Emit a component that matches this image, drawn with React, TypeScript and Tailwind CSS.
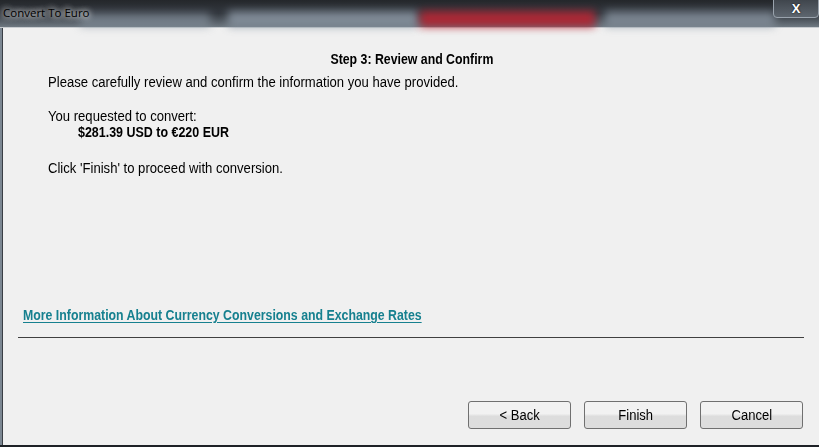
export default function App() {
    const narrow = { fontFamily: '"Liberation Sans", Arial, sans-serif' };

    return (
        <div className="w-[819px] h-[447px] overflow-hidden flex flex-col bg-[#1e2126]">
            {/* Title bar */}
            <div className="relative h-[27px] shrink-0 bg-gradient-to-b from-[#24272b] via-[#343940] to-[#6f7982] flex items-start">
                <div className="absolute left-[80px] top-[13px] w-[130px] h-[14px] bg-[#8995a2] blur-[4px] opacity-60" />
                <div className="absolute left-[228px] top-[11px] w-[190px] h-[16px] bg-[#8c98a5] blur-[4px] opacity-80" />
                <div className="absolute left-[420px] top-[11px] w-[175px] h-[16px] bg-[#b52331] blur-[4px] opacity-90" />
                <div className="absolute left-[605px] top-[11px] w-[170px] h-[16px] bg-[#8c98a5] blur-[4px] opacity-70" />
                <span
                    className="relative ml-[3px] mt-[6px] text-[11.5px] text-black leading-[14px]"
                    style={{ fontFamily: '"Open Sans", "Liberation Sans", sans-serif', textShadow: '0 0 6px #fff, 0 0 6px #fff' }}
                >
                    Convert To Euro
                </span>
                <div className="absolute right-0 top-[-2px] w-[46px] h-[20px] border border-[#9aa3ad] rounded-b-[4px] bg-gradient-to-b from-[#3e444b] to-[#5e666f] flex items-center justify-center">
                    <span className="text-white font-bold text-[13px] leading-none" style={{ fontFamily: '"Liberation Sans", sans-serif', textShadow: '0 0 2px #000' }}>
                        X
                    </span>
                </div>
            </div>

            {/* Body */}
            <div className="flex-1 flex border-t border-[#c8ccd0] mb-[2px]">
                <div className="w-[2px] bg-[#7c8792]" />
                <div className="w-[1px] bg-[#3a3f45]" />
                <div className="flex-1 bg-[#f0f0f0] flex flex-col text-[14px] text-black" style={narrow}>
                    <div className="mt-[22px] text-center font-bold leading-[18px] pl-[2px] scale-x-[0.88]">Step 3: Review and Confirm</div>
                    <div className="ml-[45px] mt-[5px] leading-[18px] origin-left scale-x-[0.935]">
                        Please carefully review and confirm the information you have provided.
                    </div>
                    <div className="ml-[45px] mt-[17px] leading-[16px] origin-left scale-x-[0.935]">You requested to convert:</div>
                    <div className="ml-[75px] leading-[16px] font-bold origin-left scale-x-[0.89]">$281.39 USD to €220 EUR</div>
                    <div className="ml-[45px] mt-[19px] leading-[18px] origin-left scale-x-[0.935]">Click 'Finish' to proceed with conversion.</div>

                    <div className="mt-auto ml-[20px] mr-[15px]">
                        <div className="origin-left scale-x-[0.88] leading-[18px]">
                            <a href="#" className="font-bold text-[#16808f] underline underline-offset-[2px]">
                                More Information About Currency Conversions and Exchange Rates
                            </a>
                        </div>
                        <div className="mt-[13px] ml-[-5px] h-[1px] bg-[#404040]" />
                    </div>

                    <div className="flex justify-end gap-[13px] mr-[16px] mt-[63px] mb-[16px]">
                        {['< Back', 'Finish', 'Cancel'].map((label) => (
                            <button
                                key={label}
                                type="button"
                                className="w-[103px] h-[28px] rounded-[3px] border border-[#707070] bg-gradient-to-b from-[#f2f2f2] from-45% to-[#dddddd] to-55% text-[14px] text-black leading-none"
                            >
                                <span className="inline-block scale-x-[0.93]">{label}</span>
                            </button>
                        ))}
                    </div>
                </div>
            </div>
        </div>
    );
}
